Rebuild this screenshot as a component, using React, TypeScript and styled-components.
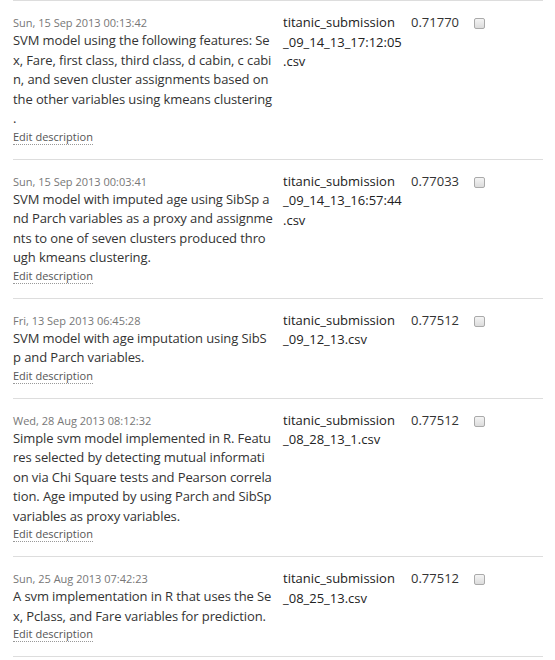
import React from "react";
import styled, { createGlobalStyle } from "styled-components";

const Global = createGlobalStyle`
  html, body { margin: 0; padding: 0; background: #fff; }
  body { font-family: "Open Sans", "DejaVu Sans", sans-serif; }
`;

const List = styled.div`
  margin-left: 13px;
  width: 530px;
  border-top: 1px solid #dddddd;
`;

const Row = styled.div`
  display: grid;
  grid-template-columns: 260px 118px 53px auto;
  column-gap: 10px;
  padding: 14px 0 13px;
  border-bottom: 1px solid #dddddd;
  align-items: start;
`;

const DescCell = styled.div`
  display: flex;
  flex-direction: column;
  align-items: flex-start;
`;

const DateText = styled.div`
  font-size: 11px;
  line-height: 16px;
  color: #777;
`;

const Description = styled.div`
  font-size: 13px;
  line-height: 19.5px;
  letter-spacing: -0.1px;
  color: #333;
`;

const Line = styled.span`
  display: block;
  white-space: nowrap;
`;

const EditLink = styled.a`
  font-size: 11px;
  line-height: 14px;
  color: #555;
  text-decoration: none;
  border-bottom: 1px dotted #999;
  margin-top: 1px;
  margin-bottom: 1px;
  cursor: pointer;
`;

const FileName = styled.div`
  font-size: 13px;
  line-height: 19.5px;
  color: #222;
  margin-top: -2px;
`;

const Score = styled.div`
  font-size: 13px;
  line-height: 19.5px;
  color: #333;
  margin-top: -2px;
`;

const Check = styled.span`
  display: block;
  width: 9px;
  height: 9px;
  margin-top: 3px;
  border: 1px solid #aaa;
  border-radius: 2px;
  background: linear-gradient(#f4f4f4, #dcdcdc);
`;

type Sub = {
  date: string;
  desc: string[];
  file: string[];
  score: string;
};

const subs: Sub[] = [
  {
    date: "Sun, 15 Sep 2013 00:13:42",
    desc: [
      "SVM model using the following features: Se",
      "x, Fare, first class, third class, d cabin, c cabi",
      "n, and seven cluster assignments based on",
      "the other variables using kmeans clustering",
      ".",
    ],
    file: ["titanic_submission", "_09_14_13_17:12:05", ".csv"],
    score: "0.71770",
  },
  {
    date: "Sun, 15 Sep 2013 00:03:41",
    desc: [
      "SVM model with imputed age using SibSp a",
      "nd Parch variables as a proxy and assignme",
      "nts to one of seven clusters produced thro",
      "ugh kmeans clustering.",
    ],
    file: ["titanic_submission", "_09_14_13_16:57:44", ".csv"],
    score: "0.77033",
  },
  {
    date: "Fri, 13 Sep 2013 06:45:28",
    desc: ["SVM model with age imputation using SibS", "p and Parch variables."],
    file: ["titanic_submission", "_09_12_13.csv"],
    score: "0.77512",
  },
  {
    date: "Wed, 28 Aug 2013 08:12:32",
    desc: [
      "Simple svm model implemented in R. Featu",
      "res selected by detecting mutual informati",
      "on via Chi Square tests and Pearson correla",
      "tion. Age imputed by using Parch and SibSp",
      "variables as proxy variables.",
    ],
    file: ["titanic_submission", "_08_28_13_1.csv"],
    score: "0.77512",
  },
  {
    date: "Sun, 25 Aug 2013 07:42:23",
    desc: [
      "A svm implementation in R that uses the Se",
      "x, Pclass, and Fare variables for prediction.",
    ],
    file: ["titanic_submission", "_08_25_13.csv"],
    score: "0.77512",
  },
];

export default function App() {
  return (
    <>
      <Global />
      <List>
        {subs.map((s, i) => (
          <Row key={i}>
            <DescCell>
              <DateText>{s.date}</DateText>
              <Description>
                {s.desc.map((l, j) => (
                  <Line key={j}>{l}</Line>
                ))}
              </Description>
              <EditLink>Edit description</EditLink>
            </DescCell>
            <FileName>
              {s.file.map((l, j) => (
                <Line key={j}>{l}</Line>
              ))}
            </FileName>
            <Score>{s.score}</Score>
            <Check />
          </Row>
        ))}
      </List>
    </>
  );
}
